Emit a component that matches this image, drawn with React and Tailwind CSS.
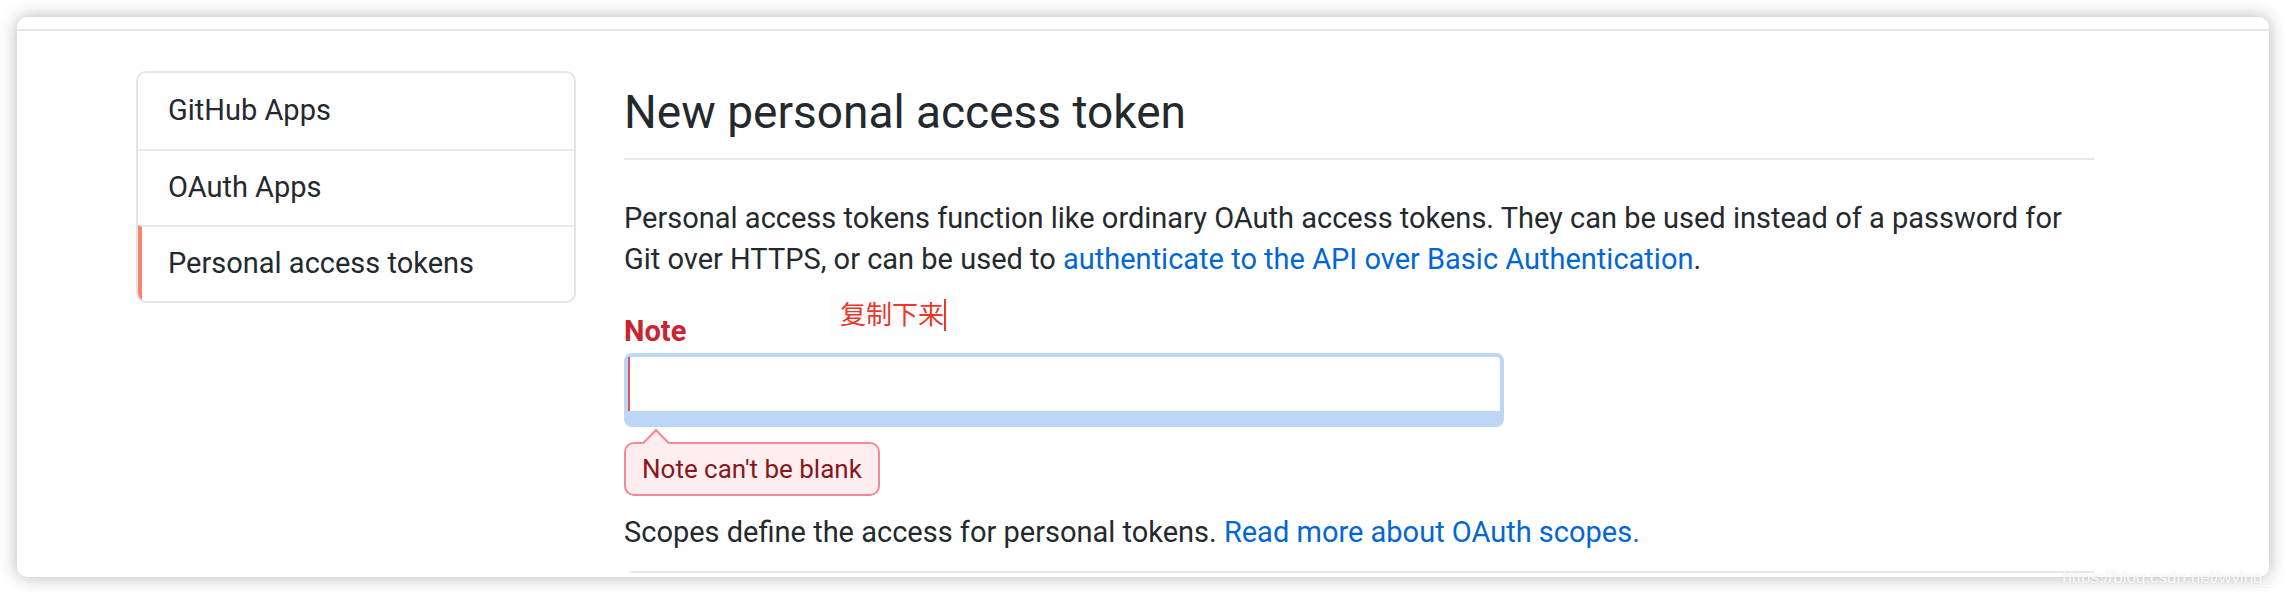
import React from 'react';

const font = { fontFamily: 'Roboto, "Noto Sans CJK SC", sans-serif' };

function SideMenu() {
    const items = ['GitHub Apps', 'OAuth Apps', 'Personal access tokens'];
    return (
        <nav className="w-[440px] shrink-0 self-start rounded-[10px] border-2 border-[#e1e4e8] overflow-hidden">
            {items.map((label, i) => {
                const active = i === items.length - 1;
                return (
                    <div
                        key={label}
                        className={`h-[76px] flex items-center text-[29px] text-[#24292e] ${i > 0 ? 'border-t-2 border-[#e8eaed]' : ''} ${active ? 'border-l-[4px] border-l-[#f9826c] pl-[26px]' : 'pl-[30px]'}`}
                    >
                        {label}
                    </div>
                );
            })}
        </nav>
    );
}

function NoteField() {
    return (
        <div className="relative">
            {/* annotation typed over the screenshot */}
            <div className="absolute left-[206px] top-[-18px] flex items-center px-[10px] py-[6px] bg-[#fdfdfd]">
                <span className="text-[26px] leading-[32px] text-[#e8382b]">复制下来</span>
                <span className="w-[2px] h-[32px] bg-[#e8382b]" />
            </div>

            <label className="block text-[29px] leading-[40px] font-bold text-[#cb2431]">Note</label>

            <div className="mt-[2px] w-[880px] h-[74px] rounded-[8px] border-[4px] border-b-[16px] border-[#bcd7f5] bg-white">
                <div className="h-full border-l-2 border-[#e05261]" />
            </div>

            <div className="relative mt-[15px] inline-block rounded-[10px] border-2 border-[#f38a96] bg-[#ffeef0] px-[16px] py-[9px] text-[26px] leading-[32px] text-[#86181d]">
                <span className="absolute left-[20px] top-[-11px] w-[20px] h-[20px] rotate-45 border-l-2 border-t-2 border-[#f38a96] bg-[#ffeef0]" />
                <span className="relative">Note can't be blank</span>
            </div>
        </div>
    );
}

export default function App() {
    return (
        <div className="relative w-[2286px] h-[592px] bg-white pt-[17px] px-[17px]" style={font}>
            <div className="h-[560px] rounded-[10px] bg-white shadow-[0_0_18px_rgba(0,0,0,0.3)] overflow-hidden">
                <div className="h-[14px] border-b-2 border-[#e6e6ea]" />

                <div className="flex gap-[48px] pl-[119px] pt-[40px]">
                    <SideMenu />

                    <main className="w-[1470px]">
                        <div className="pb-[16px] border-b-2 border-[#e6e8eb]">
                            <h1 className="text-[46px] leading-[60px] pt-[11px] text-[#24292e]">New personal access token</h1>
                        </div>

                        <p className="mt-[38px] text-[29px] leading-[41px] text-[#24292e]">
                            Personal access tokens function like ordinary OAuth access tokens. They can be used instead of a password for Git over HTTPS, or can be used to{' '}
                            <a className="text-[#0366d6]">authenticate to the API over Basic Authentication</a>.
                        </p>

                        <div className="mt-[31px]">
                            <NoteField />
                        </div>

                        <p className="mt-[16px] text-[29px] leading-[41px] text-[#24292e]">
                            Scopes define the access for personal tokens.{' '}
                            <a className="text-[#0366d6]">Read more about OAuth scopes.</a>
                        </p>

                        <div className="mt-[18px] ml-[6px] h-[2px] bg-[#e6e8eb]" />
                    </main>
                </div>
            </div>

            <div className="absolute right-[14px] bottom-[2px] text-[17px] text-white/90 [text-shadow:0_0_2px_rgba(0,0,0,0.15)]" style={{ fontFamily: '"Liberation Sans", sans-serif' }}>
                https://blog.csdn.net/wying_
            </div>
        </div>
    );
}
